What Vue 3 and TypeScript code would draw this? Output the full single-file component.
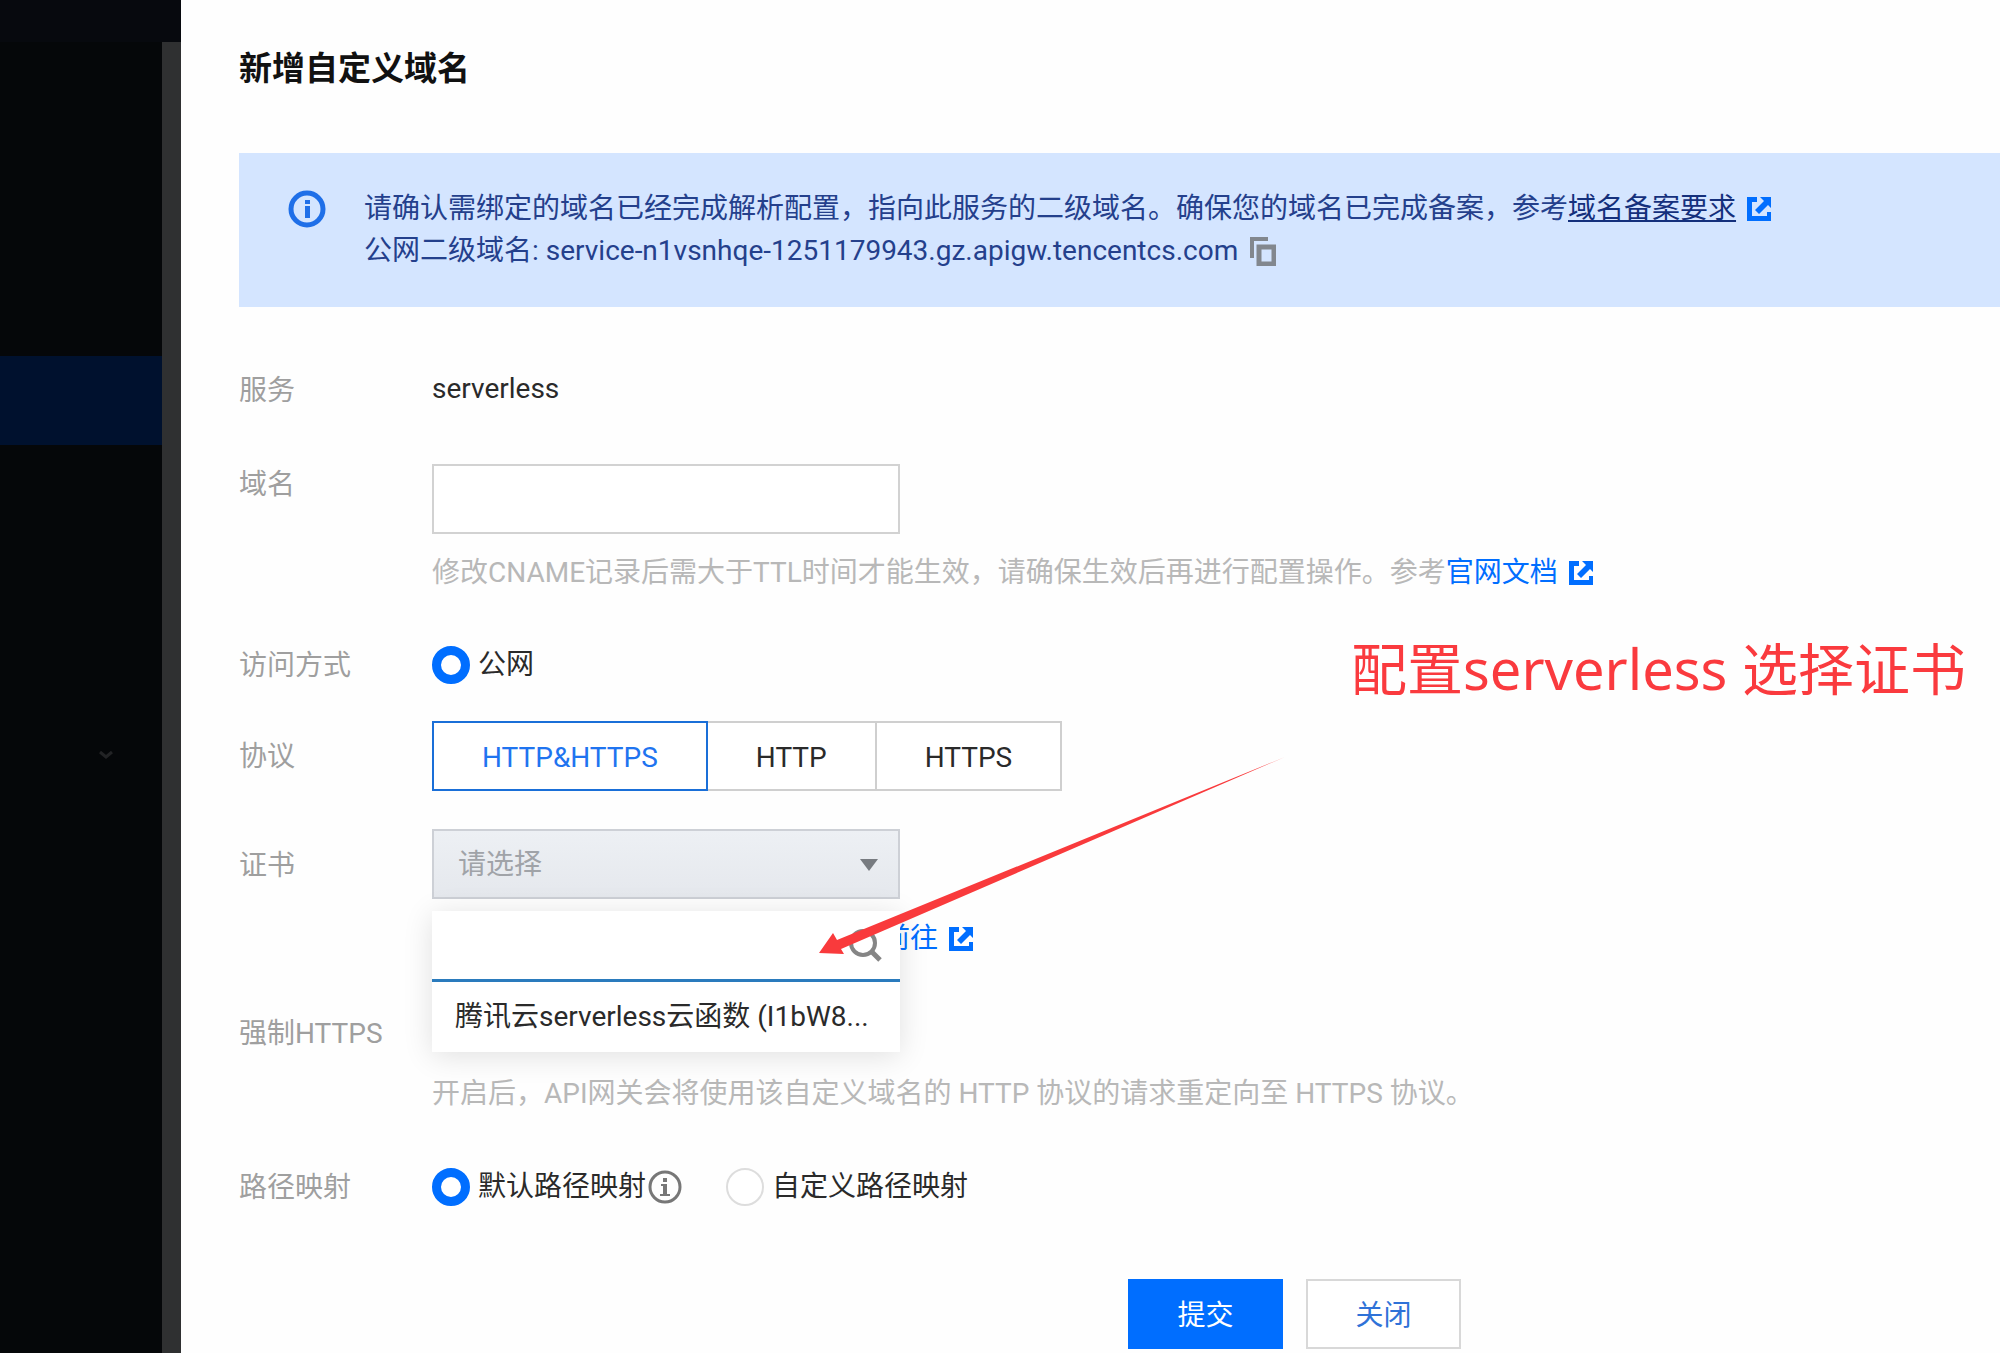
<script setup lang="ts">
import { ref } from 'vue'

const protocols = ['HTTP&HTTPS', 'HTTP', 'HTTPS']
const protocol = ref('HTTP&HTTPS')
const domain = ref('')
const keyword = ref('')
const network = ref('public')
const mapping = ref('default')
const certificates = ['腾讯云serverless云函数 (I1bW8...']
</script>

<template>
  <div class="page">
    <aside class="side">
      <div class="side-top"></div>
      <div class="side-body">
        <nav class="menu">
          <div class="menu-active"></div>
          <svg class="menu-arrow" width="16" height="10" viewBox="0 0 16 10">
            <path d="M2 2l6 5 6-5" fill="none" stroke="#222325" stroke-width="3" />
          </svg>
        </nav>
        <div class="side-edge"></div>
      </div>
    </aside>

    <main class="panel">
      <h1 class="title">新增自定义域名</h1>

      <section class="alert">
        <svg class="alert-icon" width="38" height="38" viewBox="0 0 38 38">
          <circle cx="19" cy="19" r="16" fill="none" stroke="#1f6fe8" stroke-width="5" />
          <path d="M17 10h5v4h-5zM17 16h5v12h-5z" fill="#1f6fe8" />
        </svg>
        <div class="alert-text">
          <p class="line">
            请确认需绑定的域名已经完成解析配置，指向此服务的二级域名。确保您的域名已完成备案，参考<a class="alert-link" href="#">域名备案要求</a>
            <svg class="ext" width="24" height="24" viewBox="0 0 24 24">
              <path d="M10 0H0v24h24v-9h-4v4H5V5h5z" fill="#006eff" />
              <path d="M13 0h11v11l-3-3-9 9-4-4 9-9z" fill="#006eff" />
            </svg>
          </p>
          <p class="line">
            公网二级域名: service-n1vsnhqe-1251179943.gz.apigw.tencentcs.com
            <button class="copy" type="button" aria-label="复制">
              <svg width="26" height="29" viewBox="0 0 26 29">
                <path d="M2 21V2h16" fill="none" stroke="#82878e" stroke-width="4" />
                <path d="M9 10h15v17H9z" fill="none" stroke="#82878e" stroke-width="5" />
              </svg>
            </button>
          </p>
        </div>
      </section>

      <form class="form" @submit.prevent>
        <div class="row row-service">
          <span class="label">服务</span>
          <span class="value">serverless</span>
        </div>

        <div class="row row-domain">
          <label class="label" for="domain">域名</label>
          <div class="control">
            <input id="domain" v-model="domain" class="text-box" type="text" />
            <p class="line hint">
              修改CNAME记录后需大于TTL时间才能生效，请确保生效后再进行配置操作。参考<a class="link" href="#">官网文档</a>
              <svg class="ext" width="24" height="24" viewBox="0 0 24 24">
                <path d="M10 0H0v24h24v-9h-4v4H5V5h5z" fill="#006eff" />
                <path d="M13 0h11v11l-3-3-9 9-4-4 9-9z" fill="#006eff" />
              </svg>
            </p>
          </div>
        </div>

        <div class="row row-access">
          <span class="label">访问方式</span>
          <label class="radio">
            <input v-model="network" type="radio" name="network" value="public" />
            <span>公网</span>
          </label>
        </div>

        <div class="row row-protocol">
          <span class="label">协议</span>
          <div class="segments">
            <button
              v-for="item in protocols"
              :key="item"
              type="button"
              class="segment"
              :class="{ active: item === protocol }"
              @click="protocol = item"
            >{{ item }}</button>
          </div>
        </div>

        <div class="row row-cert">
          <label class="label" for="cert">证书</label>
          <div class="control">
            <div class="select-wrap">
              <select id="cert" class="select">
                <option>请选择</option>
              </select>
              <svg class="caret" width="18" height="12" viewBox="0 0 18 12">
                <path d="M0 0h18l-9 12z" fill="#777b80" />
              </svg>
              <div class="dropdown">
                <div class="search">
                  <input v-model="keyword" type="text" aria-label="搜索" />
                  <svg class="lens" width="34" height="34" viewBox="0 0 34 34">
                    <circle cx="15" cy="15" r="12" fill="none" stroke="#858585" stroke-width="4" />
                    <path d="M23 23l9 9" stroke="#858585" stroke-width="5" />
                  </svg>
                </div>
                <ul class="options">
                  <li v-for="cert in certificates" :key="cert">{{ cert }}</li>
                </ul>
                <svg class="pointer" width="468" height="198" viewBox="0 0 468 198">
                  <path d="M0 196l14-20 4 7L466 0 22 192l3 5z" fill="#f93a3c" />
                </svg>
              </div>
            </div>
            <p class="line goto">
              <a class="link" href="#">前往</a>
              <svg class="ext" width="24" height="24" viewBox="0 0 24 24">
                <path d="M10 0H0v24h24v-9h-4v4H5V5h5z" fill="#006eff" />
                <path d="M13 0h11v11l-3-3-9 9-4-4 9-9z" fill="#006eff" />
              </svg>
            </p>
          </div>
        </div>

        <div class="row row-force">
          <span class="label">强制HTTPS</span>
        </div>
        <p class="line hint force-hint">开启后，API网关会将使用该自定义域名的 HTTP 协议的请求重定向至 HTTPS 协议。</p>

        <div class="row row-mapping">
          <span class="label">路径映射</span>
          <div class="radios">
            <label class="radio">
              <input v-model="mapping" type="radio" name="mapping" value="default" />
              <span>默认路径映射</span>
              <svg class="info" width="34" height="34" viewBox="0 0 34 34">
                <circle cx="17" cy="17" r="15" fill="none" stroke="#777" stroke-width="3" />
                <path d="M15 8h4v4h-4zM13 14h6v10h3v2H12v-2h3v-8h-2z" fill="#777" />
              </svg>
            </label>
            <label class="radio">
              <input v-model="mapping" type="radio" name="mapping" value="custom" />
              <span>自定义路径映射</span>
            </label>
          </div>
        </div>

        <div class="actions">
          <button class="btn primary" type="submit">提交</button>
          <button class="btn" type="button">关闭</button>
        </div>
      </form>

      <p class="note">配置serverless 选择证书</p>
    </main>
  </div>
</template>

<style>
body {
  margin: 0;
  background: #fefefe;
}
</style>

<style scoped>
.page {
  display: flex;
  min-height: 100vh;
  overflow: hidden;
  font: 28px/42px Roboto, "Noto Sans CJK SC", sans-serif;
  font-variant-ligatures: no-contextual;
  color: #2a2a2a;
}
.page * {
  box-sizing: border-box;
}
p, h1, ul {
  margin: 0;
  padding: 0;
}
input, select, button {
  font: inherit;
  color: inherit;
  margin: 0;
  border-radius: 0;
  outline: none;
}
svg {
  flex: none;
}

/* dimmed console behind the drawer */
.side {
  flex: none;
  display: flex;
  flex-direction: column;
  width: 181px;
  background: #050709;
}
.side-top {
  height: 42px;
  background: #07090e;
}
.side-body {
  flex: 1;
  display: flex;
}
.menu {
  flex: 1;
  display: flex;
  flex-direction: column;
  padding-top: 314px;
}
.menu-active {
  height: 89px;
  background: #00112e;
}
.menu-arrow {
  align-self: flex-end;
  margin: 305px 48px 0 0;
}
.side-edge {
  width: 19px;
  background: #2f3031;
}

.panel {
  position: relative;
  flex: 1;
  min-width: 0;
  padding: 47px 0 0 58px;
  background: #fefefe;
}
.title {
  font-size: 33px;
  line-height: 44px;
  font-weight: 700;
  color: #111;
}
.alert {
  display: flex;
  gap: 38px;
  margin-top: 62px;
  padding: 35px 0 35px 49px;
  background: #d4e5ff;
  color: #24408c;
}
.alert-icon {
  margin-top: 2px;
}
.line {
  display: flex;
  align-items: center;
  height: 42px;
  white-space: nowrap;
}
.alert-link {
  color: #14307c;
  text-decoration: underline;
  text-decoration-thickness: 2px;
  text-underline-offset: 2px;
}
.ext {
  margin-left: 11px;
}
.copy {
  display: flex;
  margin-left: 12px;
  padding: 0;
  border: 0;
  background: none;
}
.link {
  color: #006eff;
  text-decoration: none;
}

.row {
  display: flex;
}
.label {
  flex: none;
  width: 193px;
  padding-top: 2px;
  color: #9f9f9f;
}
.hint {
  color: #b8b8b8;
}
.row-service {
  margin-top: 61px;
}
.row-domain {
  margin-top: 50px;
}
.text-box {
  display: block;
  width: 468px;
  height: 70px;
  margin: 2px 0 18px;
  padding: 0 24px;
  border: 2px solid #d2d2d2;
  background: #fff;
}
.row-access {
  margin-top: 49px;
}
.row-protocol {
  margin-top: 34px;
  align-items: center;
}
.row-cert {
  margin-top: 38px;
}
.row-cert .label {
  line-height: 70px;
}
.row-force {
  margin-top: 51px;
}
.force-hint {
  margin: 18px 0 0 193px;
}
.row-mapping {
  margin-top: 50px;
}

.radio {
  display: flex;
  align-items: center;
}
.radio input {
  appearance: none;
  width: 38px;
  height: 38px;
  margin-right: 8px;
  border: 2px solid #ddd;
  border-radius: 50%;
  background: #fff;
}
.radio input:checked {
  border: 9px solid #006eff;
}
.info {
  margin-left: 2px;
}
.radios {
  display: flex;
  gap: 44px;
}

.segments {
  display: flex;
}
.segment {
  height: 70px;
  padding: 4px 48px 0;
  border: 2px solid #cfcfcf;
  border-left-width: 0;
  background: #fff;
}
.segment.active {
  border: 2px solid #1a6fd8;
  color: #1f74f0;
}

.select-wrap {
  position: relative;
  width: 468px;
}
.select {
  appearance: none;
  display: block;
  width: 100%;
  height: 70px;
  padding: 2px 24px 0;
  border: 2px solid #cdd0d6;
  background: linear-gradient(#edf0f4, #e5e8ed);
  color: #a0a3a8;
}
.caret {
  position: absolute;
  right: 22px;
  top: 30px;
}
.dropdown {
  position: absolute;
  z-index: 1;
  top: 82px;
  left: 0;
  width: 468px;
  background: #fff;
  box-shadow: 0 4px 28px rgba(0, 0, 0, 0.12);
}
.search {
  display: flex;
  align-items: center;
  height: 71px;
  padding-right: 18px;
  border-bottom: 3px solid #2a7bbd;
}
.search input {
  flex: 1;
  min-width: 0;
  height: 100%;
  padding: 0 24px;
  border: 0;
  background: none;
}
.options {
  height: 70px;
  padding: 14px 23px;
  list-style: none;
  white-space: nowrap;
}
.pointer {
  position: absolute;
  left: 387px;
  top: -154px;
}
.goto {
  margin-top: 19px;
  padding-left: 450px;
}

.actions {
  display: flex;
  gap: 23px;
  margin-top: 70px;
  padding-left: 889px;
}
.btn {
  width: 155px;
  height: 70px;
  padding-top: 4px;
  border: 2px solid #d8d8d8;
  background: #fff;
  color: #2f72d8;
}
.btn.primary {
  border-color: #006eff;
  background: #006eff;
  color: #fff;
}

/* callout placed over the form */
.note {
  position: absolute;
  left: 1170px;
  top: 633px;
  font: 56px/70px "Noto Sans", "Noto Sans CJK SC", sans-serif;
  color: #fa3a3e;
  white-space: nowrap;
}
</style>
